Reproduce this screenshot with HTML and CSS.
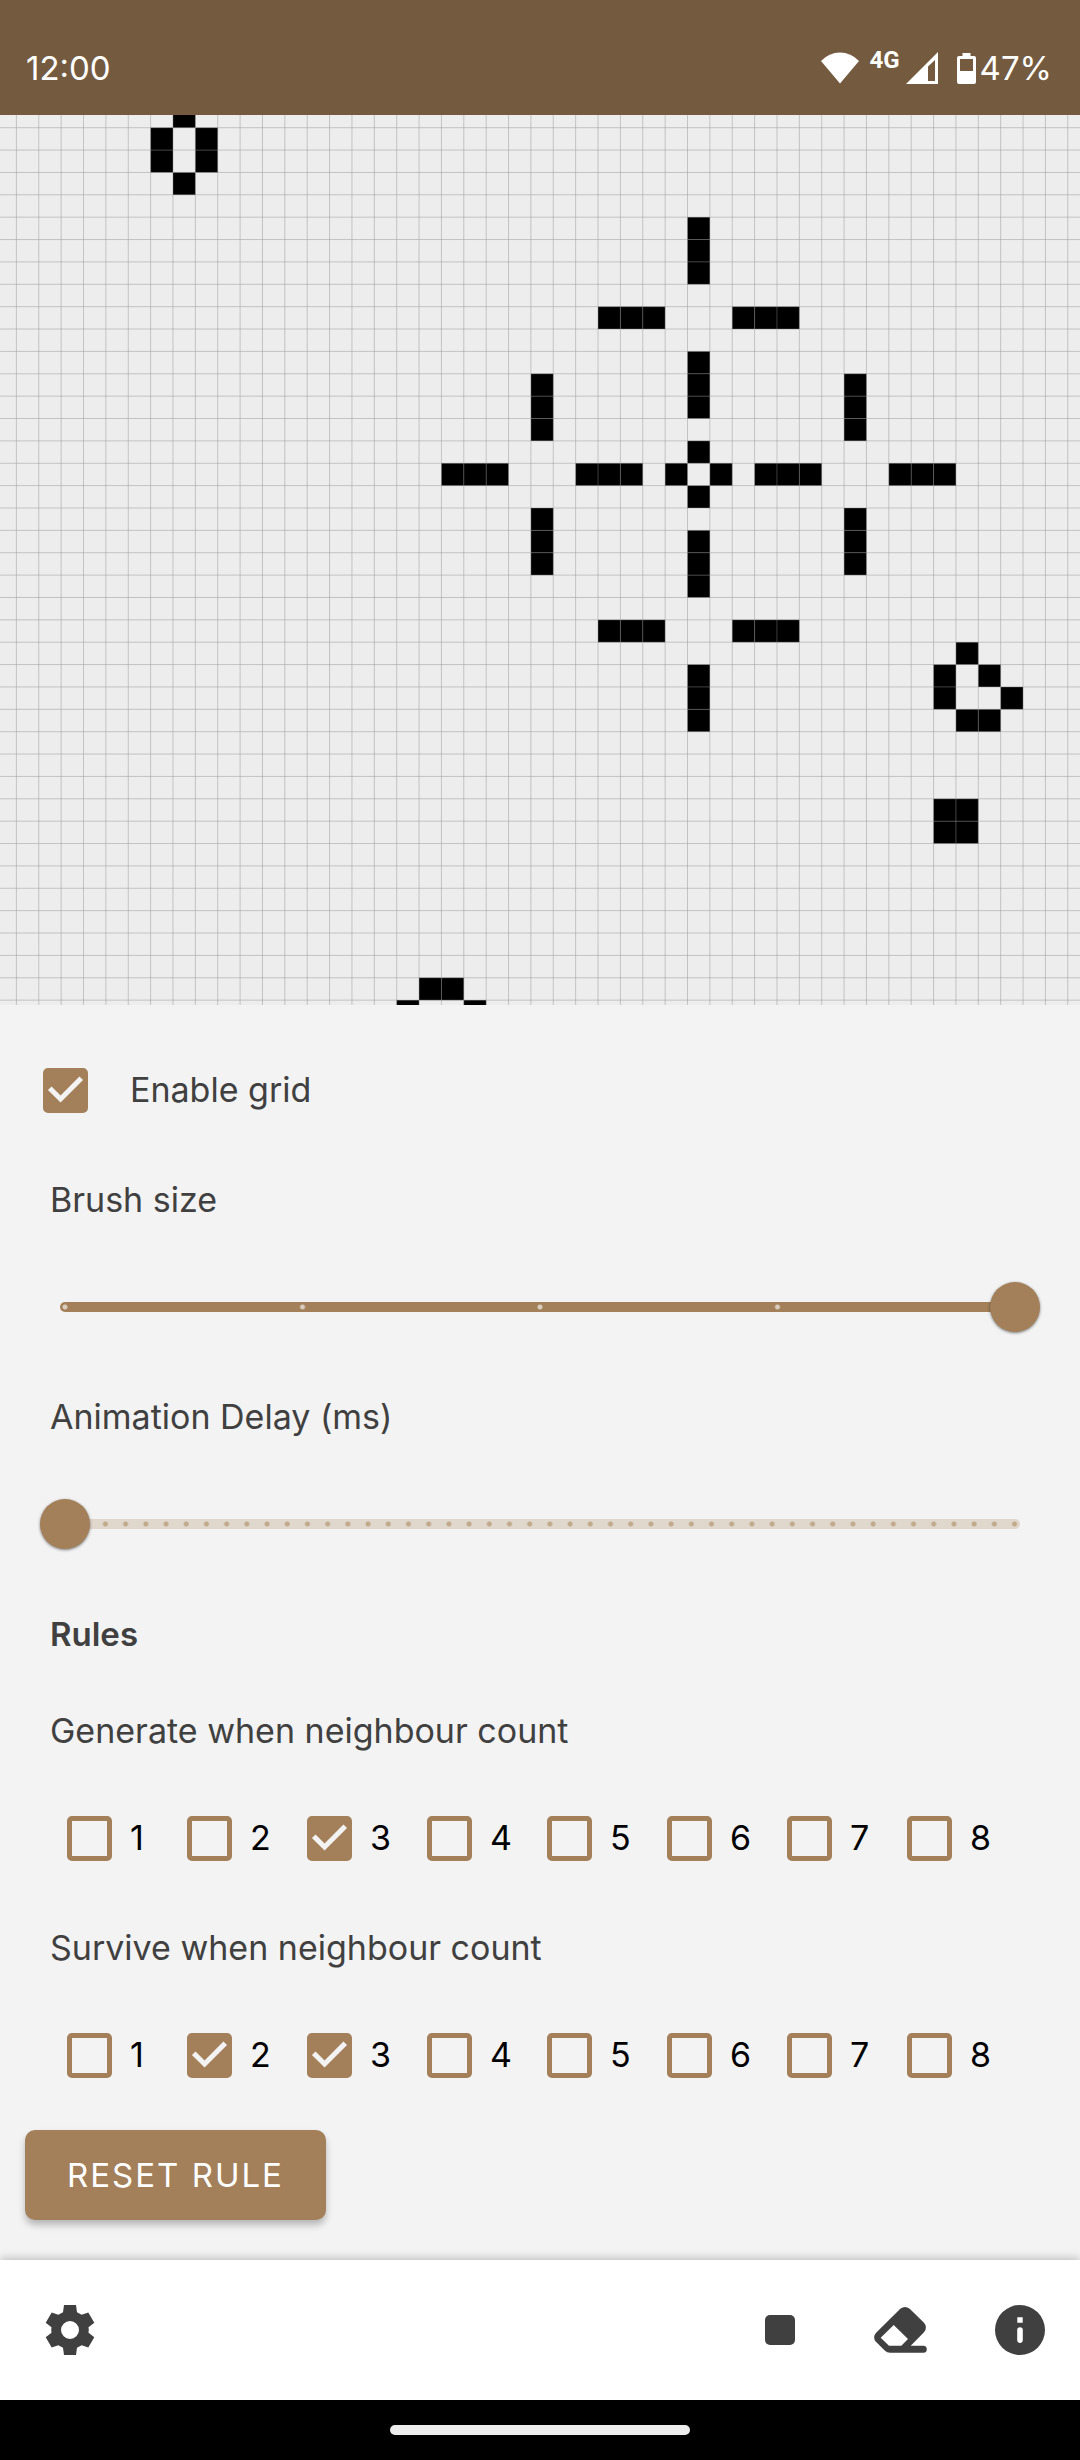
FILE: index.html
```html
<!DOCTYPE html>
<html lang="en">
<head>
<meta charset="utf-8">
<meta name="viewport" content="width=device-width, initial-scale=1">
<title>Game of Life</title>
<link rel="stylesheet" href="styles.css">
</head>
<body>
<header class="status-bar">
  <span class="clock">12:00</span>
  <div class="status-icons">
    <svg class="wifi" width="38" height="32" viewBox="0 0 38 32" aria-hidden="true"><path d="M0 9Q8 0.500 19 0.500T38 9L19 31.500Z"/></svg>
    <span class="network">4G</span>
    <svg class="signal" width="32" height="32" viewBox="0 0 32 32" aria-hidden="true"><path fill-rule="evenodd" d="M0 32L32 0V32ZM22 14.500V29H29V8Z"/></svg>
    <svg class="battery" width="19" height="32" viewBox="0 0 19 32" aria-hidden="true"><path fill-rule="evenodd" d="M5.500 1H13.500V4H17Q19 4 19 6V30Q19 32 17 32H2Q0 32 0 30V6Q0 4 2 4H5.500ZM3 7V19H16V7Z"/></svg>
    <span class="charge">47%</span>
  </div>
</header>

<main class="main">
  <canvas class="board" id="board" role="img" aria-label="Game board"></canvas>

  <form class="settings">
    <label class="toggle"><input class="check" type="checkbox" checked>Enable grid</label>

    <label class="field-label" for="brush">Brush size</label>
    <div class="slider">
      <div class="track track-brush"></div>
      <input class="range" id="brush" type="range" min="1" max="5" value="5">
    </div>

    <label class="field-label" for="delay">Animation Delay (ms)</label>
    <div class="slider">
      <div class="track track-delay"></div>
      <input class="range" id="delay" type="range" min="0" max="47" value="0">
    </div>

    <h2 class="heading">Rules</h2>

    <fieldset class="rule">
      <legend class="rule-title">Generate when neighbour count</legend>
      <div class="counts">
        <label class="count"><input class="check" type="checkbox">1</label>
        <label class="count"><input class="check" type="checkbox">2</label>
        <label class="count"><input class="check" type="checkbox" checked>3</label>
        <label class="count"><input class="check" type="checkbox">4</label>
        <label class="count"><input class="check" type="checkbox">5</label>
        <label class="count"><input class="check" type="checkbox">6</label>
        <label class="count"><input class="check" type="checkbox">7</label>
        <label class="count"><input class="check" type="checkbox">8</label>
      </div>
    </fieldset>

    <fieldset class="rule rule-survive">
      <legend class="rule-title">Survive when neighbour count</legend>
      <div class="counts">
        <label class="count"><input class="check" type="checkbox">1</label>
        <label class="count"><input class="check" type="checkbox" checked>2</label>
        <label class="count"><input class="check" type="checkbox" checked>3</label>
        <label class="count"><input class="check" type="checkbox">4</label>
        <label class="count"><input class="check" type="checkbox">5</label>
        <label class="count"><input class="check" type="checkbox">6</label>
        <label class="count"><input class="check" type="checkbox">7</label>
        <label class="count"><input class="check" type="checkbox">8</label>
      </div>
    </fieldset>

    <button class="reset" type="button">RESET RULE</button>
  </form>
</main>

<footer class="toolbar">
  <button class="tool tool-settings" type="button" aria-label="Settings">
    <svg class="icon" viewBox="0 0 60 60"><path fill-rule="evenodd" d="M24 5H36L37 12.300L41.700 14.700L48.300 12.500L54.300 22.700L48.500 27.300Q49 30 48.500 32.700L54.300 37.300L48.300 47.500L41.700 45.300L37 47.700L36 55H24L23 47.700L18.300 45.300L11.700 47.500L5.700 37.300L11.500 32.700Q11 30 11.500 27.300L5.700 22.700L11.700 12.500L18.300 14.700L23 12.300ZM30 21A9 9 0 1 0 30 39A9 9 0 1 0 30 21Z"/></svg>
  </button>
  <button class="tool" type="button" aria-label="Stop">
    <svg class="icon" viewBox="0 0 60 60"><rect x="15" y="15" width="30" height="30" rx="5"/></svg>
  </button>
  <button class="tool" type="button" aria-label="Erase">
    <svg class="icon" viewBox="0 0 60 60"><path fill-rule="evenodd" d="M30.300 8.800Q35 5 39.700 8.800L54 22.800Q58 27.500 54 32.200L40.700 45.700H53.300A3.500 3.500 0 0 1 53.300 52.700H20Q17 52.700 15 50.700L5.900 41.800Q2.200 37.300 5.900 33ZM23.700 25L10.700 37.700L19 45.700H31.300L38 39Z"/></svg>
  </button>
  <button class="tool" type="button" aria-label="Info">
    <svg class="icon" viewBox="0 0 60 60"><path fill-rule="evenodd" d="M30 5A25 25 0 1 0 30 55A25 25 0 1 0 30 5ZM27.300 17.300H32.700V22.700H27.300ZM30 27.300A2.800 2.800 0 0 1 32.800 30.100V40.100A2.800 2.800 0 0 1 27.200 40.100V30.100A2.800 2.800 0 0 1 30 27.300Z"/></svg>
  </button>
</footer>
<div class="nav-bar"><div class="home-pill"></div></div>
<script src="board.js"></script>
</body>
</html>
```
FILE: styles.css
```css
* { box-sizing: border-box; }

:root {
  --accent: #a3805a;
  --surface: #f3f3f3;
  --ink: #404040;
}

body {
  margin: 0;
  min-height: 100vh;
  display: flex;
  flex-direction: column;
  background: var(--surface);
  color: var(--ink);
  font-family: Inter, "Open Sans", sans-serif;
  font-size: 34px;
  line-height: 50px;
}

.status-bar {
  display: flex;
  align-items: center;
  justify-content: space-between;
  height: 115px;
  padding: 20px 28px 0 26px;
  background: #745b40;
  color: #fff;
  font-size: 33px;
}

.status-icons { display: flex; align-items: center; }
.status-icons svg { fill: #fff; }
.wifi { margin-right: 10px; }
.network {
  align-self: flex-start;
  margin-right: 6px;
  font-family: Roboto, sans-serif;
  font-size: 24px;
  font-weight: 700;
  line-height: 34px;
}
.signal { margin-right: 19px; }
.battery { margin-right: 4px; }

.main {
  flex: 1;
  display: flex;
  flex-direction: column;
}

.board {
  display: block;
  flex: 1 0 0;
  width: 100%;
  min-height: 300px;
  background: #ededed;
}

.settings {
  display: flex;
  flex-direction: column;
  padding: 60px 25px 40px;
}

.toggle {
  display: flex;
  align-items: center;
  gap: 42px;
  padding-left: 18px;
}

.check {
  appearance: none;
  flex: none;
  width: 45px;
  height: 45px;
  margin: 0;
  border: 5px solid var(--accent);
  border-radius: 5px;
}
.check:checked { background: var(--accent); }
.check:checked::before {
  content: "";
  display: block;
  width: 45px;
  height: 45px;
  margin: -5px;
  background: var(--surface);
  clip-path: polygon(39% 78%, 11% 50%, 19% 42%, 39% 62%, 81% 20%, 89% 28%);
}

.field-label, .heading, .rule-title {
  padding: 0 25px;
}
.field-label { margin-top: 60px; }

.slider {
  display: grid;
  margin: 57px 15px 0;
}
.track, .range { grid-area: 1 / 1; }
.track {
  align-self: center;
  height: 10px;
  margin: 0 20px;
  border-radius: 5px;
  background-position: 2px 0;
}
.track-brush {
  background-color: var(--accent);
  background-image: radial-gradient(circle at 3px center, #dacdbd 2px, transparent 3px);
  background-size: calc((100% - 10px) / 4) 100%;
}
.track-delay {
  background-color: #e0d7cd;
  background-image: radial-gradient(circle at 3px center, #c1a98c 2px, transparent 3px);
  background-size: calc((100% - 10px) / 47) 100%;
}
.range {
  appearance: none;
  width: 100%;
  height: 50px;
  margin: 0;
  background: none;
}
.range::-webkit-slider-thumb {
  appearance: none;
  width: 50px;
  height: 50px;
  border-radius: 50%;
  background: var(--accent);
  box-shadow: 0 1px 3px rgba(0, 0, 0, 0.5);
}

.heading {
  margin: 60px 0 0;
  font-size: 33px;
  font-weight: 600;
}

.rule {
  min-width: 0;
  margin: 47px 0 0;
  padding: 0;
  border: 0;
}
.rule-survive { margin-top: 60px; }

.counts {
  display: grid;
  grid-template-columns: repeat(8, 1fr);
  margin-top: 57px;
  padding: 0 28px 0 42px;
  color: #000;
}
.count {
  display: flex;
  align-items: center;
  gap: 18px;
}

.reset {
  align-self: flex-start;
  height: 90px;
  margin-top: 50px;
  padding: 0 42px;
  border: 0;
  border-radius: 10px;
  background: var(--accent);
  box-shadow: 0 5px 7px rgba(0, 0, 0, 0.25);
  color: #fff;
  font: inherit;
  font-size: 33px;
  letter-spacing: 2px;
}

.toolbar {
  display: flex;
  align-items: center;
  gap: 60px;
  height: 140px;
  padding: 0 30px 0 40px;
  background: #fff;
  box-shadow: 0 0 10px rgba(0, 0, 0, 0.3);
}
.tool {
  width: 60px;
  height: 60px;
  padding: 0;
  border: 0;
  background: none;
}
.tool-settings { margin-right: auto; }
.icon { display: block; width: 100%; fill: var(--ink); }

.nav-bar {
  position: relative;
  display: flex;
  align-items: center;
  justify-content: center;
  height: 60px;
  background: #000;
}
.home-pill {
  width: 300px;
  height: 10px;
  border-radius: 5px;
  background: #ededed;
}
```
FILE: board.js
```js
const CELL = 22.37;
const ORIGIN_X = 16.4;
const ORIGIN_Y = 12.7;

// Live cells by row: [row, columns]
const LIVE = [
  [-1, [7]], [0, [6, 8]], [1, [6, 8]], [2, [7]],
  [4, [30]], [5, [30]], [6, [30]],
  [8, [26, 27, 28, 32, 33, 34]],
  [10, [30]], [11, [23, 30, 37]], [12, [23, 30, 37]], [13, [23, 37]],
  [14, [30]],
  [15, [19, 20, 21, 25, 26, 27, 29, 31, 33, 34, 35, 39, 40, 41]],
  [16, [30]],
  [17, [23, 37]], [18, [23, 30, 37]], [19, [23, 30, 37]], [20, [30]],
  [22, [26, 27, 28, 32, 33, 34]],
  [23, [42]], [24, [30, 41, 43]], [25, [30, 41, 44]], [26, [30, 42, 43]],
  [30, [41, 42]], [31, [41, 42]],
  [38, [18, 19]], [39, [17, 20]],
];

const board = document.getElementById("board");

function draw() {
  const box = board.getBoundingClientRect();
  const w = board.width = Math.round(box.width);
  const h = board.height = Math.round(box.height);
  const ctx = board.getContext("2d");

  ctx.fillStyle = "#000";
  for (const [row, cols] of LIVE) {
    for (const col of cols) {
      ctx.fillRect(ORIGIN_X + col * CELL, ORIGIN_Y + row * CELL, CELL, CELL);
    }
  }

  ctx.strokeStyle = "rgba(136, 136, 136, 0.42)";
  ctx.lineWidth = 1;
  ctx.beginPath();
  for (let x = ORIGIN_X; x < w; x += CELL) {
    ctx.moveTo(x, 0);
    ctx.lineTo(x, h);
  }
  for (let y = ORIGIN_Y; y < h; y += CELL) {
    ctx.moveTo(0, y);
    ctx.lineTo(w, y);
  }
  ctx.stroke();
}

draw();
window.addEventListener("resize", draw);
```
